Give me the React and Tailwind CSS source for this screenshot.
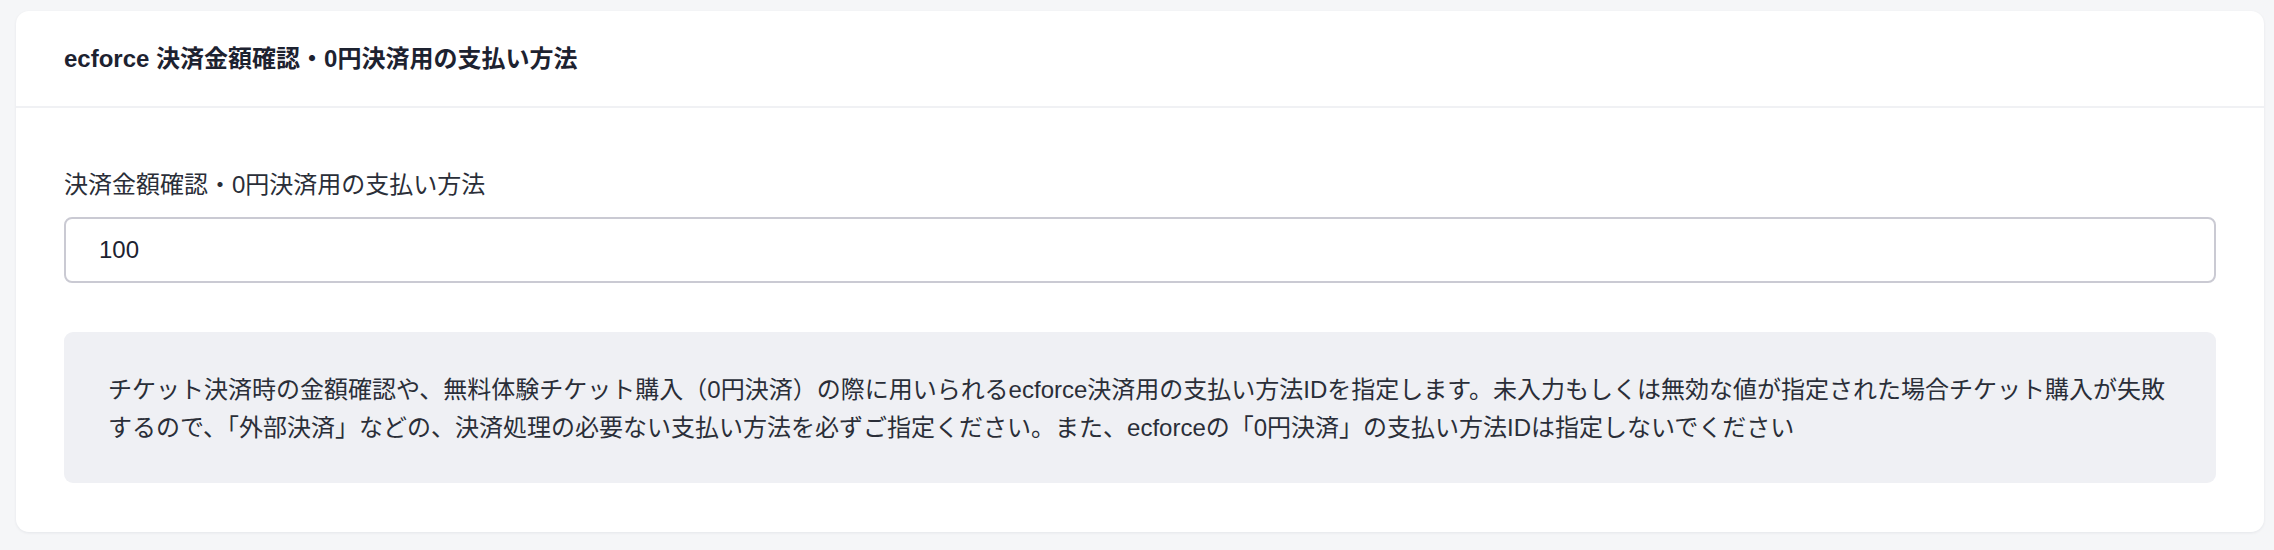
export default function App() {
  const font = { fontFamily: '"Liberation Sans", "Noto Sans CJK JP", sans-serif' };
  return (
    <div className="min-h-[550px] w-full bg-[#f5f6f8] pt-[11px] pl-4 pr-[10px] pb-[18px]" style={font}>
      <div className="rounded-[13px] bg-white shadow-[0_1px_3px_rgba(20,30,60,0.07)]">
        <div className="flex h-[97px] items-center border-b-2 border-[#f0f1f4] px-12">
          <h2 className="text-[24px] font-bold leading-[32px] text-[#1d2230]">
            ecforce 決済金額確認・0円決済用の支払い方法
          </h2>
        </div>
        <div className="px-12 pt-[61px] pb-[49px]">
          <label className="block text-[24px] leading-[32px] text-[#2a2e38]">
            決済金額確認・0円決済用の支払い方法
          </label>
          <div className="mt-4 flex h-[66px] items-center rounded-[8px] border-2 border-[#cacad3] pl-[33px] text-[24px] text-[#1d2230]">
            100
          </div>
          <div className="mt-[49px] rounded-[9px] bg-[#eff0f4] pl-[44px] pr-[44px] pt-[39px] pb-[36px] text-[24px] leading-[38px] text-[#2a2e38]">
            チケット決済時の金額確認や、無料体験チケット購入（0円決済）の際に用いられるecforce決済用の支払い方法IDを指定します。未入力もしくは無効な値が指定された場合チケット購入が失敗
            <br />
            するので、「外部決済」などの、決済処理の必要ない支払い方法を必ずご指定ください。また、ecforceの「0円決済」の支払い方法IDは指定しないでください
          </div>
        </div>
      </div>
    </div>
  );
}
